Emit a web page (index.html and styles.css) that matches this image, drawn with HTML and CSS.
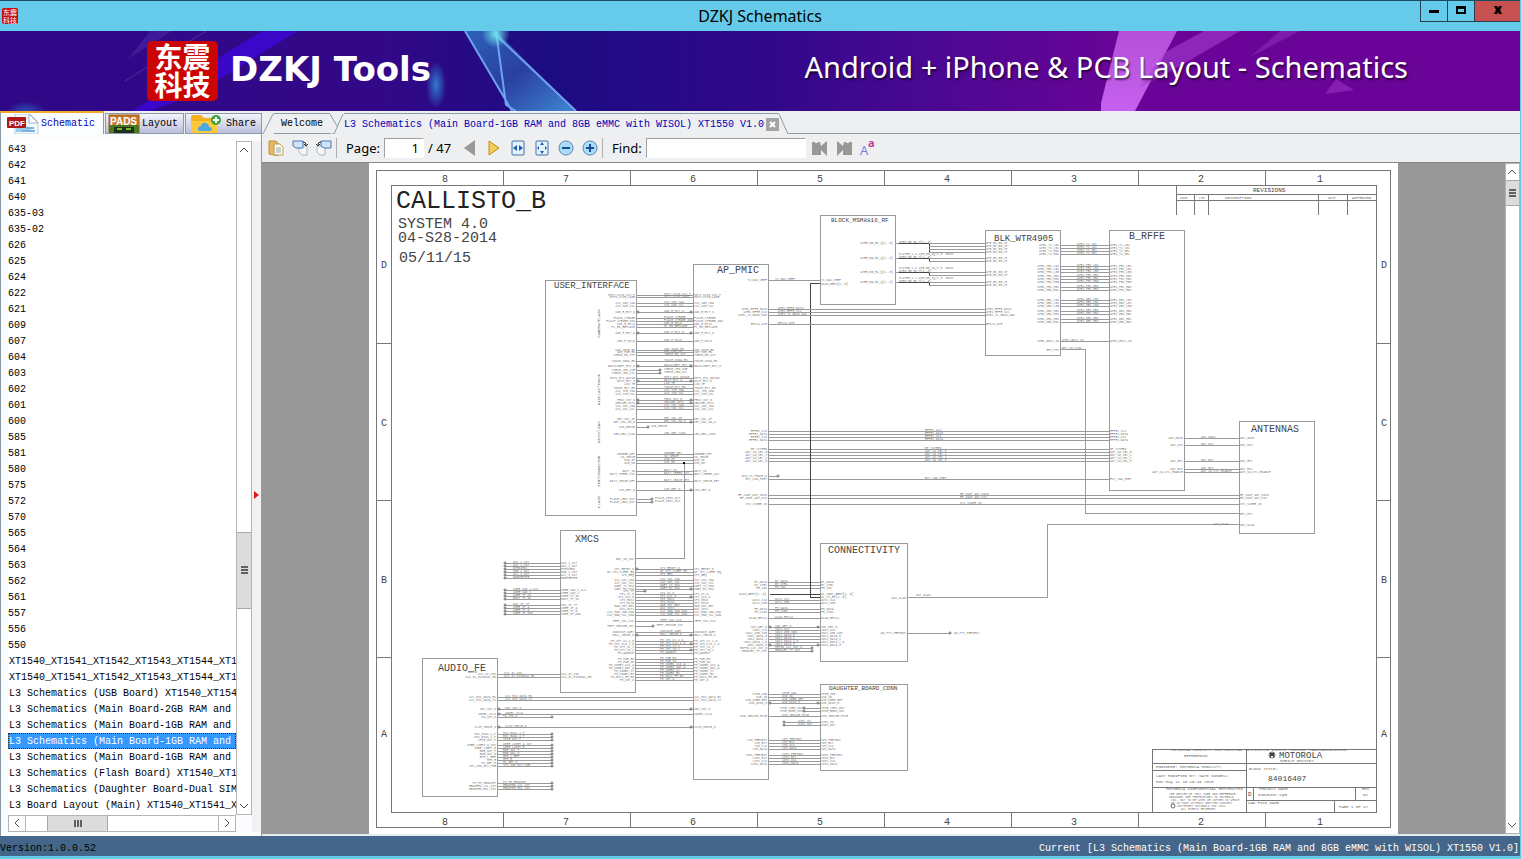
FILE: index.html
```
<!DOCTYPE html>
<html lang="en">
<head>
  <meta charset="UTF-8" />
  <meta name="viewport" content="width=device-width, initial-scale=1" />
  <title>DZKJ Schematics</title>
  <link rel="stylesheet" href="styles.css">
</head>
<body>
  <header class="titlebar">
    <div class="app-icon">东震<br>科技</div>
    <h1>DZKJ Schematics</h1>
    <div class="window-buttons">
      <button aria-label="Minimize"><svg width="10" height="10"><path d="M0 5h10v3H0z"/></svg></button>
      <button aria-label="Maximize"><svg width="10" height="10"><path d="M0 1h10v8H0zM2 4v3h6V4z" fill-rule="evenodd"/></svg></button>
      <button class="close" aria-label="Close"><svg width="10" height="10"><path d="M1 1h3l1 2 1-2h3L7 5l2 4H6L5 7 4 9H1l2-4z"/></svg></button>
    </div>
  </header>

  <div class="banner">
    <svg class="banner-art" viewBox="0 0 1520 80" preserveAspectRatio="none" aria-hidden="true">
      <defs>
        <linearGradient id="glass" x1="0" y1="0" x2="1" y2="1">
          <stop offset="0" stop-color="#2c62b8"/>
          <stop offset="0.5" stop-color="#2a3fa0"/>
          <stop offset="1" stop-color="#3f86d2"/>
        </linearGradient>
        <linearGradient id="pink" x1="0" y1="0" x2="0" y2="1">
          <stop offset="0" stop-color="#b54fd8"/>
          <stop offset="1" stop-color="#c561ee"/>
        </linearGradient>
        <radialGradient id="glow">
          <stop offset="0" stop-color="#2f7ccc"/>
          <stop offset="1" stop-color="#2f7ccc" stop-opacity="0"/>
        </radialGradient>
        <radialGradient id="spark">
          <stop offset="0" stop-color="#6fe3ee"/>
          <stop offset="1" stop-color="#6fe3ee" stop-opacity="0"/>
        </radialGradient>
      </defs>
      <path d="M262 0h36L190 66l-40 14h-18z" fill="#3d08d8" opacity="0.8"/>
      <path d="M150 0h22L128 28z" fill="#4a2ba8" opacity="0.5"/>
      <path d="M206 0L125 50" stroke="#5a4cc0" opacity="0.6"/>
      <ellipse cx="26" cy="82" rx="20" ry="12" fill="url(#glow)" opacity="0.7"/>
      <ellipse cx="436" cy="54" rx="10" ry="24" fill="url(#glow)"/>
      <path d="M465 0h31l80 80h-64z" fill="url(#glass)"/>
      <path d="M465 0l47 80M496 0l10 74M496 4l80 76M506 74l10 6" stroke="#6fa2ee" stroke-width="2" fill="none"/>
      <circle cx="496" cy="3" r="14" fill="url(#spark)"/>
      <path d="M1119 0h58l-42 80h-34v-8z" fill="url(#pink)"/>
      <path d="M1204 0h36l-76 44-24 12 24-34z" fill="#a63fce" opacity="0.6"/>
      <path d="M1280 0h20l-50 26z" fill="#8a2cb8" opacity="0.6"/>
      <path d="M1336 48l18 11-29 4z" fill="#9a30c4" opacity="0.6"/>
    </svg>
    <div class="brand">
      <div class="logo">东震<br>科技</div>
      <span class="brand-name">DZKJ Tools</span>
    </div>
    <p class="slogan">Android + iPhone &amp; PCB Layout - Schematics</p>
  </div>

  <main class="workspace">
    <aside class="sidebar">
      <nav class="side-tabs">
        <button class="side-tab active">
          <svg width="32" height="20" viewBox="0 0 32 20">
            <path d="M8 0h15l8 8v12H8z" fill="#f2f8fc" stroke="#b8cede"/>
            <path d="M22 0l9 9h-9z" fill="#fff" stroke="#9ab4c8"/>
            <path d="M9 13l9-2 9 7H9z" fill="#9ccbe8"/>
            <path d="M15 17h13M19 14h8" stroke="#7ab4dc" stroke-width="2"/>
            <rect x="0" y="3" width="19" height="11" rx="1" fill="#b01818"/>
            <text x="2" y="12" class="pdf-text">PDF</text>
          </svg>
          Schematic
        </button>
        <button class="side-tab">
          <svg width="32" height="19" viewBox="0 0 32 19">
            <rect x="1" y="1" width="30" height="18" fill="#c8782a" stroke="#a05a18"/>
            <path d="M1 11h30v8H1z" fill="#4a7a1c"/>
            <rect x="6" y="13" width="20" height="6" fill="#20301a"/>
            <path d="M9 15h5M18 15h5" stroke="#6cc030" stroke-width="2"/>
            <text x="2" y="11" class="pads-text">PADS</text>
          </svg>
          Layout
        </button>
        <button class="side-tab">
          <svg width="32" height="19" viewBox="0 0 32 19">
            <path d="M1 3q0-2 2-2h8l3 3h11q2 0 2 2v13H1z" fill="#f2b01e"/>
            <path d="M1 7h26v12H1z" fill="#fdc83a"/>
            <path d="M10 17q-3 0-2-3 1-2 3-2 1-4 5-3 3 1 3 4 3 0 3 2 0 2-2 2z" fill="#4fa8e6"/>
            <circle cx="26" cy="6" r="5" fill="#3aa63c"/>
            <path d="M26 3v6M23 6h6" stroke="#fff" stroke-width="2"/>
          </svg>
          Share
        </button>
      </nav>
      <div class="side-panel">
        <div class="list-area">
          <ul class="file-list" id="fileList"></ul>
          <div class="scroll-v">
            <button aria-label="Scroll up"><svg width="9" height="6"><path d="M0 5l4-4 4 4"/></svg></button>
            <div class="track"><div class="thumb list-thumb"></div></div>
            <button aria-label="Scroll down"><svg width="9" height="6"><path d="M0 1l4 4 4-4"/></svg></button>
          </div>
          <div class="scroll-h">
            <button aria-label="Scroll left"><svg width="6" height="9"><path d="M5 0L1 4l4 4"/></svg></button>
            <div class="track-h"><div class="thumb-h"></div></div>
            <button aria-label="Scroll right"><svg width="6" height="9"><path d="M1 0l4 4-4 4"/></svg></button>
          </div>
        </div>
        <div class="splitter"><svg width="5" height="8"><path d="M0 0l5 4-5 4z" fill="#e01818"/></svg></div>
      </div>
    </aside>

    <section class="viewer">
      <nav class="doc-tabs">
        <svg class="edge" width="12" height="21"><path d="M0 20h1L11 0h1"/></svg>
        <button class="doc-tab">Welcome</button>
        <svg class="edge" width="14" height="21"><path d="M0 0l7 12M0 20h4L13 0"/></svg>
        <button class="doc-tab active">L3 Schematics (Main Board-1GB RAM and 8GB eMMC with WISOL) XT1550 V1.0</button>
        <button class="tab-close" aria-label="Close tab"><svg width="7" height="7"><path d="M1 1l5 5M6 1L1 6" stroke="#fff" stroke-width="2"/></svg></button>
        <svg class="edge" width="10" height="21"><path d="M0 0l9 20h1"/></svg>
        <div class="tab-fill"></div>
      </nav>

      <div class="toolbar">
        <button aria-label="Open">
          <svg width="16" height="16"><path d="M1 1h7l2 2v13L1 14z" fill="#e8b860" stroke="#c09040"/><path d="M6 4h6l3 3v8H6z" fill="#fdfbea" stroke="#b8a060"/><path d="M8 8h5M8 10h5M8 12h5" stroke="#90a8b8"/></svg>
        </button>
        <button aria-label="Rotate right">
          <svg width="16" height="16"><path d="M7 6h8v9h-5l-3-3z" fill="#f4f6f8" stroke="#b0b8c0"/><path d="M1 1h10v7H4L1 6z" fill="#cfe4f8" stroke="#4878b0"/><path d="M11 2q3 0 3 3M12 4l2 2 2-2" fill="none" stroke="#333"/></svg>
        </button>
        <button aria-label="Rotate left">
          <svg width="16" height="16"><path d="M1 6h8v9H4l-3-3z" fill="#f4f6f8" stroke="#b0b8c0"/><path d="M5 1h10v7H8L5 6z" fill="#cfe4f8" stroke="#4878b0"/><path d="M5 2Q2 2 2 5M0 4l2 2 2-2" fill="none" stroke="#333"/></svg>
        </button>
        <span class="sep"></span>
        <label for="page">Page:</label>
        <input class="page-input" id="page" type="text" value="1">
        <span class="page-count">/ 47</span>
        <button aria-label="Previous page"><svg width="12" height="16"><path d="M11 0v16L0 8z" fill="#989898"/></svg></button>
        <button aria-label="Next page"><svg width="12" height="16"><path d="M1 1v14l10-7z" fill="#f4cc58" stroke="#c08c20"/></svg></button>
        <button aria-label="Fit width">
          <svg width="14" height="16"><rect x="1" y="1" width="12" height="14" rx="1" fill="#e4f2fc" stroke="#3c70a8"/><path d="M6 5v6L2 8zM8 5v6l4-3z" fill="#1f5fa8"/></svg>
        </button>
        <button aria-label="Fit page">
          <svg width="14" height="16"><rect x="1" y="1" width="12" height="14" rx="1" fill="#e4f2fc" stroke="#3c70a8"/><path d="M7 2l2 3H5zM7 14l2-3H5zM2 8l2-2v4zM12 8l-2-2v4z" fill="#1f5fa8"/></svg>
        </button>
        <button aria-label="Zoom out">
          <svg width="16" height="16"><circle cx="8" cy="8" r="7" fill="#a8dcf8" stroke="#5a88b0"/><path d="M4 8h8" stroke="#14508c" stroke-width="2"/></svg>
        </button>
        <button aria-label="Zoom in">
          <svg width="16" height="16"><circle cx="8" cy="8" r="7" fill="#a8dcf8" stroke="#5a88b0"/><path d="M4 8h8M8 4v8" stroke="#14508c" stroke-width="2"/></svg>
        </button>
        <span class="sep"></span>
        <label for="find">Find:</label>
        <input class="find-input" id="find" type="text">
        <button aria-label="Find previous"><svg width="16" height="16"><path d="M0 2h3v1h3V2h2l1 4 6-5v15l-6-6v5H0z" fill="#989898"/></svg></button>
        <button aria-label="Find next"><svg width="16" height="16"><path d="M16 2h-3v1h-3V2H8L7 6 1 1v15l6-6v5h9z" fill="#989898"/></svg></button>
        <button aria-label="Match case">
          <svg width="16" height="16"><text x="0" y="15" class="case-big">A</text><text x="8" y="7" class="case-small">a</text></svg>
        </button>
      </div>

      <div class="canvas">
        <div class="sheet-area">
          <svg class="sheet" id="sheet" viewBox="369 163 1029 671"></svg>
        </div>
        <div class="scroll-v">
          <button aria-label="Scroll up"><svg width="9" height="6"><path d="M0 5l4-4 4 4"/></svg></button>
          <div class="track"><div class="thumb page-thumb"></div></div>
          <button aria-label="Scroll down"><svg width="9" height="6"><path d="M0 1l4 4 4-4"/></svg></button>
        </div>
      </div>
    </section>
  </main>

  <footer class="statusbar">
    <span>Version:1.0.0.52</span>
    <span class="current">Current [L3 Schematics (Main Board-1GB RAM and 8GB eMMC with WISOL) XT1550 V1.0]</span>
  </footer>

  <script src="script.js"></script>
</body>
</html>
```
FILE: styles.css
```
:root {
  --sky: #66cbea;
  --panel: #eeeff0;
  --line: #8c9ba8;
  --blue-text: #0000b8;
  --mono: "Liberation Mono", "Noto Sans CJK SC", monospace;
  --ui: "Noto Sans", "Noto Sans CJK SC", sans-serif;
}

* {
  box-sizing: border-box;
}
body {
  margin: 0;
  height: 100vh;
  display: flex;
  flex-direction: column;
  background: var(--panel);
  border-right: 1px solid var(--sky);
  border-bottom: 3px solid var(--sky);
  font-family: var(--mono);
  font-size: 10px;
  color: #000;
  overflow: hidden;
}
button {
  font: inherit;
  color: inherit;
  background: none;
  border: none;
  padding: 0;
  cursor: pointer;
}

/* title bar */
.titlebar {
  flex: none;
  height: 31px;
  display: grid;
  grid-template-columns: 1fr auto 1fr;
  align-items: center;
  background: var(--sky);
  border-top: 1px solid #1c4a62;
}
.titlebar h1 {
  margin: 0;
  font-family: var(--ui);
  font-size: 16px;
  font-weight: normal;
  line-height: 28px;
}
.app-icon {
  width: 16px;
  height: 16px;
  margin-left: 2px;
  background: #c80808;
  border-radius: 2px;
  color: #fff;
  font-family: "Noto Sans CJK SC", sans-serif;
  font-size: 7px;
  line-height: 8px;
  text-align: center;
}
.window-buttons {
  justify-self: end;
  align-self: start;
  display: flex;
  height: 21px;
  border-left: 1px solid #23414f;
  border-bottom: 1px solid #23414f;
}
.window-buttons button {
  width: 27px;
  border-right: 1px solid #23414f;
}
.window-buttons .close {
  width: 45px;
  background: #c75050;
  border-right: none;
}

/* banner */
.banner {
  flex: none;
  position: relative;
  height: 80px;
  display: flex;
  justify-content: space-between;
  align-items: center;
  padding: 0 112px 0 147px;
  background: linear-gradient(90deg, #2f0887 0, #330888 25%, #1c0c82 36%, #30088a 50%, #4c0892 62%, #6a0498 74%, #6a0498 100%);
  color: #fff;
}
.banner-art {
  position: absolute;
  inset: 0;
  width: 100%;
  height: 100%;
}
.brand {
  position: relative;
  display: flex;
  align-items: center;
  gap: 12px;
}
.logo {
  width: 71px;
  height: 60px;
  padding-top: 1px;
  background: #cc0404;
  border-radius: 5px;
  font-family: "Noto Sans CJK SC", sans-serif;
  font-size: 28px;
  font-weight: bold;
  line-height: 28px;
  text-align: center;
}
.brand-name {
  padding-bottom: 4px;
  font-family: "DejaVu Sans", sans-serif;
  font-size: 34px;
  font-weight: bold;
}
.slogan {
  position: relative;
  margin: 0;
  padding-bottom: 8px;
  font-family: var(--ui);
  font-size: 29px;
  line-height: 36px;
  text-shadow: 1px 2px 2px rgba(0, 0, 0, 0.6);
}

/* main area */
.workspace {
  flex: 1;
  min-height: 0;
  display: flex;
}
.sidebar {
  flex: none;
  width: 262px;
  display: flex;
  flex-direction: column;
}
.side-tabs {
  flex: none;
  height: 23px;
  display: flex;
  align-items: flex-end;
  gap: 1px;
}
.side-tab {
  height: 21px;
  display: flex;
  align-items: center;
  gap: 2px;
  padding: 0 5px 0 2px;
  border: 1px solid var(--line);
  background: linear-gradient(#f2f3fa, #bcbfdc);
}
.side-tab:last-child {
  gap: 4px;
  padding-left: 4px;
}
.side-tab.active {
  height: 23px;
  gap: 2px;
  padding: 0 8px 0 6px;
  border-top: 2px solid #f4a82c;
  border-bottom: none;
  background: #fbfdff;
  color: var(--blue-text);
}
.pdf-text {
  font: bold 8px "Liberation Sans", sans-serif;
  fill: #fff;
}
.pads-text {
  font: bold 10px "Liberation Sans", sans-serif;
  fill: #fff;
}
.side-panel {
  flex: 1;
  min-height: 0;
  display: flex;
  padding: 7px 0 4px 7px;
  background: #fbfcfe;
  border-left: 1px solid var(--line);
  border-right: 1px solid var(--line);
}
.list-area {
  flex: 1;
  min-width: 0;
  display: grid;
  grid-template-columns: 1fr 16px;
  grid-template-rows: 1fr 17px;
}
.file-list {
  min-height: 0;
  margin: 0;
  padding: 0;
  list-style: none;
  overflow: hidden;
  background: #fff;
}
.file-list a {
  display: block;
  height: 16px;
  line-height: 18px;
  white-space: nowrap;
  overflow: hidden;
  color: inherit;
  text-decoration: none;
}
.file-list .name {
  padding-left: 1px;
}
.file-list .selected {
  background: #3399ff;
  color: #fff;
  outline: 1px dotted #4a2a00;
  outline-offset: -1px;
}
.splitter {
  flex: none;
  width: 9px;
  display: flex;
  align-items: center;
  justify-content: center;
  padding-top: 16px;
  background: #f2f2f4;
}

/* scrollbars */
.scroll-v {
  display: flex;
  flex-direction: column;
  border: 1px solid #b4b4b4;
  background: #fff;
}
.scroll-v button {
  flex: none;
  height: 16px;
}
.scroll-v svg,
.scroll-h svg {
  display: block;
  margin: auto;
}
.scroll-v path,
.scroll-h path {
  fill: none;
  stroke: #555;
  stroke-width: 1;
}
.track {
  flex: 1;
  min-height: 0;
  display: flex;
  flex-direction: column;
}
.thumb {
  border-top: 1px solid #a8a8a8;
  border-bottom: 1px solid #a8a8a8;
  background: linear-gradient(#606060 0 2px, transparent 2px 3px, #606060 3px 5px, transparent 5px 6px, #606060 6px 8px) center / 7px 8px no-repeat #dcdcdc;
}
.list-thumb {
  height: 12%;
  margin-top: 374px;
}
.page-thumb {
  height: 26px;
}
.scroll-h {
  display: flex;
  border: 1px solid #b4b4b4;
  background: #fff;
}
.scroll-h button {
  flex: none;
  width: 16px;
}
.track-h {
  flex: 1;
  border: solid #b4b4b4;
  border-width: 0 1px;
}
.thumb-h {
  width: 32%;
  height: 100%;
  margin-left: 21px;
  border: solid #a8a8a8;
  border-width: 0 1px;
  background: linear-gradient(90deg, #606060 0 2px, transparent 2px 3px, #606060 3px 5px, transparent 5px 6px, #606060 6px 8px) center / 8px 7px no-repeat #dcdcdc;
}

/* document viewer */
.viewer {
  flex: 1;
  min-width: 0;
  display: flex;
  flex-direction: column;
}
.doc-tabs {
  flex: none;
  height: 23px;
  padding-top: 2px;
  display: flex;
}
.edge {
  flex: none;
}
.edge path {
  fill: none;
  stroke: var(--line);
  transform: translateY(1px);
}
.doc-tab {
  padding: 0 7px;
  border-top: 1px solid var(--line);
  border-bottom: 1px solid var(--line);
}
.doc-tab.active {
  padding: 0;
  border-bottom: none;
  color: var(--blue-text);
}
.tab-close {
  width: 15px;
  padding: 0 0 0 2px;
  border-top: 1px solid var(--line);
}
.tab-close svg {
  display: block;
  width: 13px;
  height: 13px;
  padding: 3px;
  background: #a4a4a4;
}
.tab-fill {
  flex: 1;
  border-bottom: 1px solid var(--line);
}
.toolbar {
  flex: none;
  height: 28px;
  display: flex;
  align-items: center;
  padding-left: 2px;
  font-family: var(--ui);
  font-size: 13px;
}
.toolbar button {
  width: 24px;
  height: 24px;
}
.toolbar svg {
  display: block;
  margin: auto;
}
.toolbar label {
  padding: 0 4px 0 9px;
}
.sep {
  width: 1px;
  height: 20px;
  background: #b0b0b0;
}
.toolbar input {
  height: 20px;
  border: 1px solid;
  border-color: #a0a0a0 #fff #fff #a0a0a0;
  background: #fff;
  font: inherit;
}
.toolbar .page-input {
  width: 40px;
  padding: 0 4px;
  text-align: right;
}
.find-input {
  width: 160px;
  margin-right: 2px;
}
.page-count {
  padding: 0 7px 0 4px;
}
.case-big {
  font: 13px "Open Sans", sans-serif;
  fill: #7a78e0;
}
.case-small {
  font: bold 11px "Open Sans", sans-serif;
  fill: #c8389c;
}
.canvas {
  flex: 1;
  min-height: 0;
  display: flex;
  border-top: 1px solid #888;
  border-bottom: 2px solid #e4ecf2;
}
.canvas .scroll-v {
  width: 15px;
}
.sheet-area {
  flex: 1;
  min-width: 0;
  display: flex;
  justify-content: center;
  background: #989898;
  overflow: hidden;
}
.sheet {
  height: 100%;
  background: #fff;
}

/* schematic drawing */
.sheet path {
  fill: none;
  stroke: #9a9a9a;
  shape-rendering: crispEdges;
}
.sheet .frame {
  stroke: #777;
}
.sheet .bus {
  stroke: #444;
}
.sheet circle {
  fill: #fff;
  stroke: #6a6a6a;
  stroke-width: 1;
}
.sheet .dot {
  fill: #000;
  stroke: none;
}
.sheet text {
  font-family: "Liberation Mono", monospace;
  fill: #444;
}
.sheet .t25 { font-size: 25px; fill: #222; }
.sheet .t15 { font-size: 15px; }
.sheet .t10 { font-size: 10px; }
.sheet .t9 { font-size: 9px; }
.sheet .t8 { font-size: 8px; }
.sheet .t6 { font-size: 6px; }
.sheet .t4 { font-size: 4px; fill: #666; }
.sheet .t3 { font-size: 3px; fill: #777; }

/* status bar */
.statusbar {
  flex: none;
  height: 20px;
  display: flex;
  justify-content: space-between;
  padding: 0 1px 0 0;
  background: #43668a;
  line-height: 26px;
}
.current {
  color: #fff;
}
```
FILE: script.js
```
// ---- file list ----
const files = [
  "643", "642", "641", "640", "635-03", "635-02", "626", "625", "624", "622", "621",
  "609", "607", "604", "603", "602", "601", "600", "585", "581", "580", "575", "572",
  "570", "565", "564", "563", "562", "561", "557", "556", "550",
  "XT1540_XT1541_XT1542_XT1543_XT1544_XT1548",
  "XT1540_XT1541_XT1542_XT1543_XT1544_XT1548",
  "L3 Schematics (USB Board) XT1540_XT1541",
  "L3 Schematics (Main Board-2GB RAM and 16GB",
  "L3 Schematics (Main Board-1GB RAM and 8GB",
  "L3 Schematics (Main Board-1GB RAM and 8GB",
  "L3 Schematics (Main Board-1GB RAM and 8GB",
  "L3 Schematics (Flash Board) XT1540_XT1541",
  "L3 Schematics (Daughter Board-Dual SIM)",
  "L3 Board Layout (Main) XT1540_XT1541_XT1542"
];
const selectedFile = 37;
const list = document.getElementById("fileList");
files.forEach((file, i) => {
  const li = document.createElement("li");
  const a = document.createElement("a");
  a.href = "#";
  a.textContent = file;
  if (/^[XL]/.test(file)) a.classList.add("name");
  if (i === selectedFile) a.classList.add("selected");
  li.appendChild(a);
  list.appendChild(li);
});

// ---- schematic sheet ----
const sheet = document.getElementById("sheet");

function add(tag, attrs, text) {
  const el = document.createElementNS("http://www.w3.org/2000/svg", tag);
  for (const key in attrs) el.setAttribute(key, attrs[key]);
  if (text) el.textContent = text;
  sheet.appendChild(el);
  return el;
}
function wire(d, cls) {
  add("path", { d: d, class: cls || "wire" });
}
function label(x, y, size, text, anchor) {
  add("text", { x: x, y: y, class: "t" + size, "text-anchor": anchor || "start" }, text);
}
function pin(x, y) {
  add("circle", { cx: x, cy: y, r: 1 });
}

// frame with zone marks
wire("M376 170H1390V827H376zM391 185H1376V812H391z", "frame");
[503, 630, 757, 884, 1011, 1138, 1265].forEach(x => wire(`M${x} 170v15M${x} 812v15`, "frame"));
[343, 500, 657].forEach(y => wire(`M376 ${y}h15M1376 ${y}h14`, "frame"));
[445, 566, 693, 820, 947, 1074, 1201, 1320].forEach((x, i) => {
  label(x, 182, 10, String(8 - i), "middle");
  label(x, 825, 10, String(8 - i), "middle");
});
[["D", 268], ["C", 426], ["B", 583], ["A", 737]].forEach(([name, y]) => {
  label(384, y, 10, name, "middle");
  label(1384, y, 10, name, "middle");
});

label(396, 208, 25, "CALLISTO_B");
label(398, 228, 15, "SYSTEM 4.0");
label(398, 242, 15, "04-S28-2014");
label(399, 262, 15, "05/11/15");

// blocks: x, y, right, bottom, title, title x, title baseline, size
const blocks = [
  [545, 280, 636, 515, "USER_INTERFACE", 554, 288, 9],
  [693, 264, 768, 779, "AP_PMIC", 717, 273, 10],
  [820, 215, 895, 304, "BLOCK_MSM8816_RF", 831, 222, 6],
  [985, 230, 1060, 355, "BLK_WTR4905", 994, 241, 9],
  [1109, 230, 1184, 490, "B_RFFE", 1129, 239, 10],
  [1239, 421, 1314, 533, "ANTENNAS", 1251, 432, 10],
  [560, 530, 635, 692, "XMCS", 575, 542, 10],
  [820, 543, 907, 661, "CONNECTIVITY", 828, 553, 10],
  [422, 658, 497, 796, "AUDIO_FE", 438, 671, 10],
  [820, 684, 907, 770, "DAUGHTER_BOARD_CONN", 829, 690, 6]
];
blocks.forEach(([x, y, r, b, title, tx, ty, size]) => {
  wire(`M${x} ${y}H${r}V${b}H${x}z`);
  label(tx, ty, size, title);
});

[["CAMERA/FLASH", 338], ["DISPLAY/TOUCH", 405], ["KEYS/LEDS", 443], ["SIM/CONNECTOR", 487], ["FLASH", 508]].forEach(([name, y]) => {
  add("text", { class: "t4", transform: `translate(600 ${y}) rotate(-90)` }, name);
});

// nets between two blocks, one per row: y, name, open pins (l, r, o = both, e = open end)
function nets(x1, x2, mid, rows, hide) {
  rows.trim().split("\n").forEach(row => {
    const [y, name, flag] = row.trim().split(" ");
    const ty = Number(y) + 1;
    wire(`M${x1} ${y}H${x2}`);
    if (flag === "l" || flag === "o") pin(x1 + 2, y);
    if (flag === "r" || flag === "o") pin(x2 - 2, y);
    if (flag === "e") pin(x2, y);
    if (hide !== "left") label(x1 - 1, ty, 3, name, "end");
    if (mid) label(mid, y, 3, name);
    if (hide !== "right") label(x2 + 1, ty, 3, name);
  });
}

nets(636, 693, 664, `
  295 MIPI_CSI0_CLK_P
  297 MIPI_CSI0_LANE
  303 I2C_CAM_SDA
  306 I2C_CAM_SCL
  312 CAM_R_RST_N o
  318 FLASH_STROBE
  321 FLASH_STROBE_NOW
  324 CAM_R_MCLK
  327 FL_EN_REPLACE
  333 CAM_F_RST_N o
  341 CAM_F_MCLK
  350 CAM_VDIG_EN
  352 CAM_PWR_EN
  355 TORCH_EN_ISP
  361 TOUCH_VDDA_EN
  366 BACKLIGHT_RST_N o
  378 MIPI_DSI_DATA0
  381 DISP_RST_N o
  384 LCD_TE
  388 TOUCH_RST_EN
  391 I2C_TCH_SDA
  394 I2C_TCH_SCL
  400 PROX_INT_N o
  403 SENSOR_INT1 o
  406 I2C_SNS_SDA
  409 I2C_SNS_SCL
  419 KEY_VOL_UP
  422 KEY_VOL_DN_N r
  434 LED_DRV_SINK
  454 CHARGE_DET
  457 ID_SENSE
  460 USB_DP
  463 USB_DM
  471 BATT_ID
  474 BATT_THERM_SNS
  481 BATT_SENSE_DET
  490 SIM_DET_N r`);
nets(636, 660, 664, `
  370 TORCH_LED_CUR e
  373 TORCH_LED_CTL e`, "right");
nets(636, 648, 651, "427 VIB_DRIVE e", "right");
nets(636, 652, 655, `
  499 FLASH_LED1_OUT e
  502 FLASH_LED2_OUT e`, "right");

nets(635, 693, 660, `
  569 SPI_RESET_N l
  572 AP_SPI_SLEEP_RQ
  575 SPI_REQ
  580 I2C_SNS_SDA
  583 I2C_SNS_SCL
  586 UART_TX_MCU
  589 UART_RX_MCU r
  594 SPI_CS_N
  597 SPI_CLK_N r
  600 SPI_MOSI
  603 SPI_MISO
  606 MAG_INT_RDY
  609 ACC_INT1
  612 I2C_MAG_SDA_NOW
  615 I2C_MAG_SCL_NOW
  621 TEMP_SNS_CLK
  632 CONSOLE_UART
  635 HALL_SENSE_N o
  641 PM_SPI_CS_1_N
  644 PM_SPI_CLK_1_N r
  647 PM_SPI_SI_1
  650 PM_SPI_SO_1 r
  653 PM_WAKEUP
  659 PM_PWR_EN
  662 PM_PWR_OK
  665 PM_CODEC_CLK_A
  668 PM_CODEC_DAT_A
  671 PM_CODEC_SY
  674 PM_CODEC_RX
  677 PM_MCLK_FM_EN
  680 PM_INT_N`);
nets(635, 645, 0, "591 SPI_TP e", "right");
nets(635, 653, 656, "626 TEMP_SENSOR_INT e", "right");

nets(505, 560, 513, `
  563 ACC_1_INT
  566 ACC_2_INT
  569 GYROSENS
  572 MAG_1_INT
  575 ALS_1_INT
  578 BAROMETER
  590 CORE_SWD_1_CLK
  593 CORE_SWD_2
  596 CORE_TP_NC
  599 BOOT_TP_NC
  605 MCU_VP_TP
  608 CORE_VP_A
  611 CORE_TP_B
  614 CORE_VP_NMU`, "left");
[563, 566, 569, 572, 575, 578, 590, 593, 596, 599, 605, 608, 611, 614].forEach(y => pin(505, y));

// battery sense line
wire("M684 463V558H635");
add("rect", { x: 683, y: 462, width: 2, height: 2, class: "dot" });
label(634, 560, 3, "BAT_ID_SNS", "end");

nets(497, 560, 504, `
  674 CLK_32_CDC
  677 CLK_32_MICBIAS_EN`);
label(468, 673, 3, "AUDIO");
nets(497, 693, 505, `
  697 I2S_MIC_DATA_RX
  700 I2S_MIC_DATA_TX
  709 CDC_INT_N o
  714 CODEC_SCLK l
  727 SLIM_SENSE_N o`);
nets(497, 552, 503, `
  717 PA_SPK_N e
  734 MIC_BIAS_1_P e
  737 MIC_BIAS_2_P e
  740 SPKR_OUT_P e
  745 CORE_LIGHT_A_INT e
  748 CORE_LIGHT_B e
  751 EAR_OUT_P e
  754 EAR_OUT_N e
  757 HPH_L_REF e
  760 HPH_R e
  763 HS_DET_N e
  766 SPK_VDD_BST_PWR e
  783 PM_FM_HEADSET e
  786 HEADPHN_LVL_INT e
  789 HEADPHN_RVL_INT e`, "right");

nets(768, 820, 775, `
  582 BT_DATA
  585 BT_CTRL
  588 FM_SDI
  600 WCSS_CLK
  603 WCSS_CMD
  609 FM_DATA
  612 FM_SSBI
  618 WLAN_RFCLK
  627 SDC_DET_N o
  630 SDC2_CLK
  633 SDC2_CMD_CON
  636 SDC2_DATA_0
  639 SDC2_DATA_1
  642 SDC2_DATA_2_N
  645 SDC2_DATA_3 o`);
nets(768, 812, 775, `
  648 HDPHN_LVL_INT_N e
  651 HEADSET_TP_INT e`, "right");

nets(768, 820, 782, `
  694 SPKR_VDD
  697 USB_ID
  700 USB_CHRG_DET
  703 USB_DCIN_N o
  716 USB_SENSOR_FUSE
  740 SIM_PRESENT
  743 SIM_RST
  746 SIM_CLK
  749 SIM_DATA
  755 SIM2_PRESENT
  758 SIM2_RST
  761 SIM2_CLK
  764 SIM2_DATA`);
nets(804, 820, 0, `
  708 SPKR_LDRV_OUT
  711 SPKR_RDRV_OUT`);
nets(784, 820, 798, `
  722 USBS_IN
  725 USBS_OUT`, "left");
[[804, 708], [804, 711], [784, 722], [784, 725]].forEach(p => pin(p[0], p[1]));

nets(768, 1109, 925, `
  431 RFFE1_CLK
  434 RFFE1_DATA
  437 RFFE2_CLK
  440 RFFE2_DATA
  449 GP_TXTHRO
  452 ANT_SW_SEL_0
  455 ANT_SW_SEL_1
  458 ANT_SW_SEL_2
  461 ANT_SW_SEL_3
  479 EXT_LNA_PDET`);
nets(768, 778, 0, "476 GSM_TX_PHASE_D e", "right");
nets(768, 1239, 960, `
  495 RF_COUP_ANT_MAIN
  498 RF_COUP_ANT_DIV
  504 CTI_SCORE_IN`);
nets(1184, 1239, 1201, `
  438 ANT_MAIN
  445 ANT_DIV
  461 ANT_GPS
  469 ANT_RX2
  472 ANT_SW_CTL_ENABLE`);

// antenna and rf long wires
wire("M907 597H1047V524H1239");
label(906, 599, 3, "ANT_WLAN", "end");
label(916, 596, 3, "ANT_WLAN");
label(1214, 525, 3, "ANT_WLAN");
label(1240, 526, 3, "ANT_WLAN");
wire("M907 633H949");
pin(950, 633);
label(906, 634, 3, "WD_PTT_PRESENT", "end");
label(954, 634, 3, "WD_PTT_PRESENT");
wire("M1060 349H1085V513H1239");
label(1059, 351, 3, "GPS_PPS", "end");
label(1062, 349, 3, "GPS_IN_SYNC");
label(1240, 515, 3, "GPS_PPS");

nets(768, 820, 775, "280 TX_DAC_VREF");
wire("M820 283H810V597H820M770 594H820", "bus");
label(821, 285, 3, "WLAN_GRFC[1..0]");
label(766, 595, 3, "WLAN_GRFC[1..0]", "end");
label(821, 595, 3, "WL_COEX_GRFC[1..0]");
label(821, 598, 3, "WL_TX_RF[1..0]");
nets(768, 985, 778, `
  309 WTR1_RFFE_DATA
  312 WTR1_RFFE_CLK
  315 WTR1_TX_GAIN_DAC
  324 RFCLK_WTR`);

// baseband bus fan-out into the transceiver
[
  [243, [243, 246, 249, 252]],
  [258, [258, 261]],
  [272, [272, 275]],
  [282, [282, 285]]
].forEach(([y, taps], i) => {
  const last = taps[taps.length - 1];
  wire(`M895 ${y}h4`);
  wire(`M899 ${y}H929V${last}`, "bus");
  label(893, y + 1, 3, "WTR0_BB_RX_Q[1..0]", "end");
  label(899, y, 3, "WTR0_BB_RX_Q[1..0]");
  if (i > 0) label(899, y - 3, 3, "0:WTR0_1.1 WTR_BB_IQ_P_0 .MAIN");
  taps.forEach(t => {
    wire(`M929 ${t}H985`);
    label(986, t + 1, 3, "WTR_RX_BB_IP");
  });
});

nets(1060, 1109, 1077, `
  245 WTR1_TX_LB1
  248 WTR1_TX_LB2
  251 WTR1_TX_HB1
  254 WTR1_TX_HB2
  266 WTR1_PRX_LB1
  269 WTR1_PRX_LB2
  272 WTR1_PRX_LB3
  276 WTR1_PRX_MB1
  279 WTR1_PRX_MB2
  282 WTR1_PRX_MB3
  287 WTR1_PRX_HB1
  290 WTR1_PRX_HB2
  300 WTR1_DRX_LB1
  303 WTR1_DRX_LB2
  306 WTR1_DRX_LB3
  311 WTR1_DRX_MB1
  314 WTR1_DRX_MB2
  319 WTR1_DRX_HB1
  322 WTR1_DRX_HB2`);
nets(1060, 1109, 1062, "341 WTR1_GNSS_IN");

// revision table
wire("M1176 185V215M1176 194H1376M1176 200H1376M1194 194V215M1208 194V215M1318 194V215M1347 194V215", "frame");
label(1253, 192, 6, "REVISIONS");
label(1180, 199, 3, "ZONE");
label(1199, 199, 3, "LTR");
label(1225, 199, 4, "DESCRIPTION");
label(1328, 199, 3, "DATE");
label(1352, 199, 4, "APPROVED");

// title block
wire("M1152 812V749H1376M1246 749V812M1152 763H1376M1152 770H1246M1152 787H1376M1246 800H1376M1253 787V800M1355 787V800M1334 800V812", "frame");
label(1171, 751, 4, "MOTOROLA MOBILITY CONFIDENTIAL RESTRICTED UNLESS TOOLING TRADEMARKBLOCKED");
label(1184, 757, 4, "REFERENCES");
label(1156, 768, 4, "ENGINEER: MOTOROLA MOBILITY");
label(1156, 777, 4, "LAST MODIFIED BY:  NATE CONNELL");
label(1156, 783, 4, "Mon May 11 16:29:49 2015");
label(1166, 790, 4, "MOTOROLA CONFIDENTIAL RESTRICTED");
label(1169, 795, 3, "THE DESIGN OF THIS PAGE AND REFERENCE");
label(1169, 798, 3, "DRAWINGS ARE PROPRIETARY TO MOTOROLA");
label(1171, 801, 3, "INC. NOT TO BE USED OR COPIED IN WHOLE");
label(1171, 804, 3, "OR IN PART WITHOUT WRITTEN CONSENT");
label(1177, 807, 3, "COPYRIGHT MOTOROLA INC 2014");
label(1181, 810, 3, "ALL RIGHTS RESERVED");
add("circle", { cx: 1173, cy: 806, r: 2 });
add("circle", { cx: 1272, cy: 755, r: 3 });
add("path", { d: "M1270 757l1-4 1 3 1-3 1 4", class: "bus" });
label(1279, 758, 9, "MOTOROLA");
label(1280, 762, 4, "MOBILE DEVICES");
label(1249, 770, 4, "BLOCK TITLE:");
label(1268, 781, 8, "84016407");
label(1259, 790, 4, "PROJECT NAME");
label(1248, 796, 6, "D");
label(1258, 796, 4, "84016407.cpm");
label(1362, 790, 4, "REV");
label(1363, 796, 4, "01");
label(1248, 804, 4, "CAD FILE NAME");
label(1339, 808, 4, "PAGE 1 OF 47");
```
